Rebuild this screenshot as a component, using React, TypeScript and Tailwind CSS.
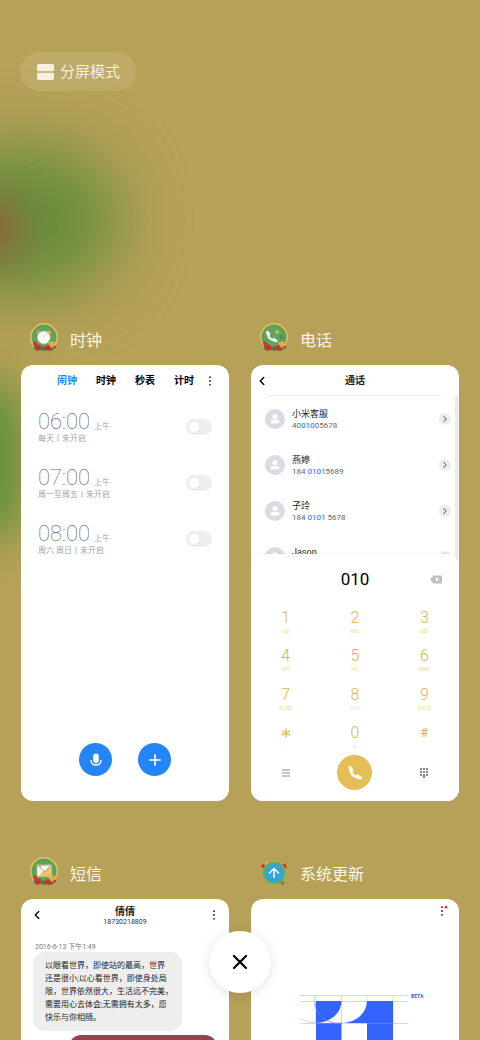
import type { ReactNode } from "react";
import { ChevronLeft, ChevronRight, Plus, X } from "lucide-react";

const alarms = [
  { time: "06:00", period: "上午", repeat: "每天丨未开启" },
  { time: "07:00", period: "上午", repeat: "周一至周五丨未开启" },
  { time: "08:00", period: "上午", repeat: "周六 周日丨未开启" },
];

const contacts = [
  { name: "小米客服", before: "40", match: "010", after: "05678" },
  { name: "燕婷", before: "184 ", match: "010", after: "15689" },
  { name: "子玲", before: "184 ", match: "010", after: "1 5678" },
  { name: "Jason", before: "184 ", match: "010", after: "2 5678" },
];

const keys = [
  { digit: "1", sub: "QO" },
  { digit: "2", sub: "ABC" },
  { digit: "3", sub: "DEF" },
  { digit: "4", sub: "GHI" },
  { digit: "5", sub: "JKL" },
  { digit: "6", sub: "MNO" },
  { digit: "7", sub: "PQRS" },
  { digit: "8", sub: "TUV" },
  { digit: "9", sub: "WXYZ" },
  { digit: "*", sub: "," },
  { digit: "0", sub: "+" },
  { digit: "#", sub: "" },
];

function Handset() {
  return (
    <g fill="none" stroke="#fff" strokeLinecap="round">
      <path d="M5.500 6.500C6.500 13 11 17.500 17.500 18.500" strokeWidth="3.4" />
      <path d="M5.500 5l2.200 3.600" strokeWidth="4.4" />
      <path d="M15.400 16.300l3.600 2.200" strokeWidth="4.4" />
    </g>
  );
}

// Round holiday badge shared by the clock, phone and message icons
function WreathIcon({ children }: { children: ReactNode }) {
  return (
    <svg viewBox="0 0 28 30" className="h-[30px] w-7">
      <circle cx="14" cy="14" r="13.2" fill="#5fa55c" stroke="#edbd55" strokeWidth="1.5" />
      <circle cx="14" cy="14" r="11" fill="none" stroke="#3f8450" strokeWidth="0.8" strokeDasharray="1 2" />
      {children}
      <path d="M4 22l3-1 3 4 5-2 5 2 3-2 1 3-3 2-3-1-4 1-4-1-3 1-3-2z" fill="#4f7a3d" />
      <circle cx="5" cy="20.5" r="2" fill="#d8322f" />
      <circle cx="8.5" cy="24.5" r="3" fill="#d8322f" />
      <circle cx="18" cy="25" r="2.8" fill="#d8322f" />
      <circle cx="24.5" cy="24" r="1.5" fill="#c23a2d" />
      <path d="M18 20l5-2 3 3-4 4z" fill="#eeb650" />
      <path d="M20 20l3 3m-1-4l3 2" stroke="#c08034" strokeWidth="0.7" />
      <circle cx="8.5" cy="24.5" r="0.8" fill="#8e1f2a" />
      <circle cx="18" cy="25" r="0.8" fill="#8e1f2a" />
    </svg>
  );
}

function ClockIcon() {
  return (
    <WreathIcon>
      <circle cx="8.5" cy="9.5" r="2.2" fill="#b99a78" />
      <circle cx="19" cy="9.5" r="2.2" fill="#b99a78" />
      <circle cx="13.8" cy="14.5" r="6.5" fill="#fbfaf7" stroke="#b9ad9c" strokeWidth="0.7" />
      <path d="M13.500 12v2" stroke="#c9c0b4" strokeWidth="0.8" />
      <path d="M16 8.500l1.500 2.500 2.500-1-1-2.500z" fill="#edbd55" />
    </WreathIcon>
  );
}

function PhoneIcon() {
  return (
    <WreathIcon>
      <g transform="translate(4 6) scale(0.64)">
        <Handset />
      </g>
      <path d="M17 6l.8 2.200 2.200.8-2.200.8L17 12l-.8-2.200L14 9l2.200-.8z" fill="#edbd55" />
      <path d="M21.500 12l1.600 2-1.600 2-1.600-2z" fill="none" stroke="#2e6b45" strokeWidth="0.8" />
    </WreathIcon>
  );
}

function MessageIcon() {
  return (
    <WreathIcon>
      <rect x="7" y="7.5" width="14.5" height="12" rx="0.8" fill="#faf8f0" stroke="#a8a493" strokeWidth="0.5" />
      <path d="M21.500 8v11.500H8l6-6z" fill="#efc266" />
      <path d="M7.500 8l7 7 7-7z" fill="#faf8f0" stroke="#7f8b78" strokeWidth="0.8" />
      <circle cx="10" cy="9.5" r="1.2" fill="#edb13d" />
    </WreathIcon>
  );
}

function UpdateIcon() {
  return (
    <svg viewBox="0 0 28 30" className="h-[30px] w-7">
      <circle cx="14" cy="16" r="12" fill="#5cae62" stroke="#d9a94b" strokeWidth="0.8" />
      <circle cx="14" cy="16" r="9.2" fill="#31a4dc" />
      <path d="M14 21v-9.500m-5 5l5-5 5 5" fill="none" stroke="#fff" strokeWidth="1.5" />
      <circle cx="3" cy="9" r="1.8" fill="#d42f30" />
      <path d="M5 6l2-2 1.500 1.500-2 2z" fill="#e9b343" />
      <path d="M22.500 7l3-.5 1.500 4-2 .5z" fill="#d42f30" />
      <path d="M22.500 24l1.500 2-1.500 2-1.500-2z" fill="none" stroke="#3c6a3c" strokeWidth="0.9" />
    </svg>
  );
}

function MoreIcon({ hasUpdate = false }: { hasUpdate?: boolean }) {
  return (
    <svg viewBox="0 0 12 12" className="size-3" fill="#222">
      <circle cx="6" cy="2.2" r="0.9" />
      <circle cx="6" cy="6" r="0.9" />
      <circle cx="6" cy="9.8" r="0.9" />
      {hasUpdate && <circle cx="10" cy="2.2" r="1.4" fill="#f5362c" />}
    </svg>
  );
}

function TaskCard({ title, icon, children }: { title: string; icon: ReactNode; children: ReactNode }) {
  return (
    <section>
      <header className="flex h-[50px] items-center gap-3 pl-[9px]">
        <span className="pb-1">{icon}</span>
        <h2 className="pt-[2px] text-base leading-5 text-[#fbf6e6]">{title}</h2>
      </header>
      <div className="flex aspect-[208/436] flex-col overflow-hidden rounded-xl bg-white">
        {children}
      </div>
    </section>
  );
}

function ClockApp() {
  return (
    <>
      <nav className="flex h-8 items-center justify-end gap-[19px] pr-[13px] text-[10px] leading-4 font-bold text-black">
        <button className="text-[#2487f5]">闹钟</button>
        <button>时钟</button>
        <button>秒表</button>
        <button>计时</button>
        <button aria-label="更多" className="-ml-[9px]">
          <MoreIcon />
        </button>
      </nav>
      <ul className="flex-1 pt-[2px]">
        {alarms.map((alarm) => (
          <li key={alarm.time} className="flex h-14 items-center justify-between px-[17px]">
            <label htmlFor={alarm.time} className="text-[8px] leading-[10px] text-[#a3a3a3]">
              <span className="flex items-baseline gap-1">
                <span className="text-[22px] leading-6 font-thin text-[#5c5c5c]">{alarm.time}</span>
                {alarm.period}
              </span>
              {alarm.repeat}
            </label>
            <input
              id={alarm.time}
              type="checkbox"
              className="h-4 w-[26px] appearance-none rounded-full bg-[#ededed] p-[3px] before:block before:size-[10px] before:rounded-full before:bg-white checked:bg-[#2487f5] checked:before:ml-auto"
            />
          </li>
        ))}
      </ul>
      <div className="flex justify-center gap-[26px] pb-[25px]">
        <button aria-label="语音" className="flex size-[33px] items-center justify-center rounded-full bg-[#2385f7]">
          <svg viewBox="0 0 14 14" className="size-[14px]">
            <rect x="4.2" y="0.5" width="5.6" height="9.5" rx="2.8" fill="#fff" />
            <path d="M2 7c0 3 2 5 5 5s5-2 5-5" fill="none" stroke="#fff" strokeWidth="1.3" />
          </svg>
        </button>
        <button aria-label="添加闹钟" className="flex size-[33px] items-center justify-center rounded-full bg-[#2385f7] text-white">
          <Plus className="size-[18px]" strokeWidth={2.2} />
        </button>
      </div>
    </>
  );
}

function DialerApp() {
  return (
    <>
      <header className="grid h-[30px] grid-cols-[1fr_auto_1fr] items-center px-1 pt-[2px]">
        <button aria-label="返回">
          <ChevronLeft className="size-[14px] text-black" strokeWidth={2.5} />
        </button>
        <h3 className="text-[10px] leading-4 font-bold text-[#222]">通话</h3>
      </header>
      <div className="mx-4 h-px bg-[#f0f0f0]" />
      <div className="flex min-h-0 flex-1">
        <ul className="flex-1 overflow-hidden pl-[14px]">
          {contacts.map((contact) => (
            <li key={contact.name} className="flex h-[46px] items-center">
              <svg viewBox="0 0 20 20" className="size-5">
                <circle cx="10" cy="10" r="10" fill="#d9dce3" />
                <circle cx="10" cy="7.5" r="2.6" fill="#fff" />
                <rect x="5.5" y="11" width="9" height="3.5" rx="1.7" fill="#fff" />
              </svg>
              <div className="ml-[7px] flex-1 pt-px leading-[11px]">
                <p className="text-[9px] text-[#222]">{contact.name}</p>
                <p className="text-[8px] text-[#666]">
                  {contact.before}
                  <span className="font-medium text-[#19a0ea]">{contact.match}</span>
                  {contact.after}
                </p>
              </div>
              <button
                aria-label={`${contact.name} 详情`}
                className="mr-1 flex size-3 items-center justify-center rounded-full bg-[#ededed]"
              >
                <ChevronRight className="size-[10px] text-[#666]" strokeWidth={2.5} />
              </button>
            </li>
          ))}
        </ul>
        <div className="mr-px w-[3px] bg-[#ececec]" />
      </div>
      <div className="relative -mt-3 rounded-t-xl bg-white shadow-[0_-1px_3px_rgba(0,0,0,0.05)]">
        <div className="grid h-[47px] grid-cols-3 items-center pt-[3px]">
          <output className="col-start-2 text-center text-[17px] leading-5 text-black">010</output>
          <button aria-label="删除" className="mr-[17px] justify-self-end">
            <svg viewBox="0 0 12 9" className="h-[9px] w-3">
              <path d="M3.500.5H11a1 1 0 0 1 1 1v6a1 1 0 0 1-1 1H3.500L0 4.500z" fill="#bdbdbd" />
              <path d="M5.500 2.800l3.400 3.400m0-3.400L5.500 6.200" stroke="#fff" strokeWidth="1.1" />
            </svg>
          </button>
        </div>
        <div className="grid h-[154px] grid-cols-3 grid-rows-4 text-[#e2b544]">
          {keys.map((key) => (
            <button key={key.digit} className="flex flex-col items-center justify-center pt-px">
              {key.digit === "*" ? (
                <svg viewBox="0 0 20 20" className="size-5" role="img" aria-label="*">
                  <path d="M10 5.500v9M6 7.800l8 4.400M14 7.800l-8 4.400" stroke="#e6c05a" strokeWidth="1.4" />
                </svg>
              ) : key.digit === "#" ? (
                <span className="text-xs leading-5 font-medium">#</span>
              ) : (
                <span className="text-base leading-5 font-light">{key.digit}</span>
              )}
              <span className="h-[6px] text-[5px] leading-[6px] text-[#efd891]">{key.sub}</span>
            </button>
          ))}
        </div>
        <div className="grid grid-cols-3 items-center justify-items-center pb-[11px]">
          <button aria-label="菜单">
            <svg viewBox="0 0 8 8" className="size-2">
              <path d="M0 1h8M0 4h8M0 7h8" stroke="#8a8a8a" strokeWidth="1" />
            </svg>
          </button>
          <button aria-label="拨打" className="flex size-[35px] items-center justify-center rounded-full bg-[#e5be58]">
            <svg viewBox="0 0 24 24" className="size-[18px]">
              <Handset />
            </svg>
          </button>
          <button aria-label="拨号盘">
            <svg viewBox="0 0 8 10" className="h-[10px] w-2" fill="#808080">
              {[0, 3, 6].map((y) =>
                [0, 3, 6].map((x) => <rect key={`${x}-${y}`} x={x} y={y} width="2" height="2" rx="0.5" />)
              )}
              <rect x="3" y="8" width="2" height="2" rx="0.5" />
            </svg>
          </button>
        </div>
      </div>
    </>
  );
}

function MessagesApp() {
  return (
    <>
      <header className="grid h-9 grid-cols-[1fr_auto_1fr] items-center px-[9px]">
        <button aria-label="返回" className="pb-1">
          <ChevronLeft className="size-[14px] text-black" strokeWidth={2.5} />
        </button>
        <div className="pt-[2px] text-center">
          <h3 className="text-[10px] leading-[11px] font-bold text-[#222]">倩倩</h3>
          <p className="pb-1 text-[7px] leading-[10px] text-[#333]">18730218809</p>
        </div>
        <button aria-label="更多" className="justify-self-end pb-1">
          <MoreIcon />
        </button>
      </header>
      <div className="px-3 pt-[7px]">
        <time className="block pl-[2px] text-[7px] leading-[10px] text-[#777]">2016-6-13 下午1:49</time>
        <p className="w-[149px] rounded-xl bg-[#eee] px-3 py-[7px] text-[8px] leading-[13px] whitespace-nowrap text-[#222]">
          以眼看世界，即使站的最高，世界
          <br />
          还是很小;以心看世界，即使身处局
          <br />
          限，世界依然很大，生活远不完美，
          <br />
          需要用心去体会;无需拥有太多，愿
          <br />
          快乐与你相随。
        </p>
        <p className="mt-1 ml-auto h-16 w-[148px] rounded-xl bg-[#964350]" />
      </div>
    </>
  );
}

function UpdateApp() {
  return (
    <>
      <header className="flex justify-end pt-[6px] pr-[11px]">
        <button aria-label="更多">
          <MoreIcon hasUpdate />
        </button>
      </header>
      <div className="mt-[76px] flex gap-[3px] pl-[49px]">
        <svg viewBox="0 0 108 140" className="h-[140px] w-[108px]">
          <g fill="none" stroke="#b5cdf5" strokeWidth="0.7">
            <path d="M0 2.500h108M0 8.500h108M0 30.500h108M16 2v28M41.500 2v28M67 2v28M93 2v28" />
            <path d="M0 25.500Q7 30 16 30M14 3q0 15 9 22t19 5" />
          </g>
          <g fill="#3463fd">
            <path d="M16 8h25.500A25.500 22 0 0 1 16 30z" />
            <path d="M67 8v22H42A25.500 22 0 0 0 67 8z" />
            <path d="M16 30h25.500v110H16zM67 8h26v132H67z" />
          </g>
          <path d="M16 30.500h25.500M67 30.500h26M14.500 10q1 9 8.500 15t19 5" fill="none" stroke="#6a90fb" strokeWidth="0.6" />
        </svg>
        <span className="text-[5px] leading-[7px] font-bold text-[#3463fd]">BETA</span>
      </div>
    </>
  );
}

export default function App() {
  return (
    <main
      lang="zh-CN"
      className="relative isolate h-screen overflow-hidden bg-[#b7a158] px-[21px] pt-[52px] font-['Roboto','Noto_Sans_CJK_SC',sans-serif]"
    >
      {/* Blurred wallpaper */}
      <div className="absolute top-[145px] -left-20 -z-10 h-[150px] w-[200px] rounded-full bg-[#6a8e3d] blur-[32px]" />
      <div className="absolute top-[195px] -left-10 -z-10 h-[70px] w-[62px] rounded-full bg-[#8b683c] blur-[18px]" />
      <div className="absolute top-[375px] -left-20 -z-10 h-[170px] w-[105px] rounded-full bg-[#5f903b] blur-[22px]" />

      <button className="-ml-px flex h-[39px] items-center gap-[6px] rounded-full bg-white/10 pr-4 pl-[17px] text-[15px] leading-5 text-[#f6efdc]">
        <svg viewBox="0 0 17 16" className="h-4 w-[17px]" fill="#f6efe0">
          <rect width="17" height="7.3" rx="1.5" />
          <rect y="8.7" width="17" height="7.3" rx="1.5" />
        </svg>
        分屏模式
      </button>

      <div className="mt-56 grid grid-cols-2 gap-x-[22px] gap-y-12">
        <TaskCard title="时钟" icon={<ClockIcon />}>
          <ClockApp />
        </TaskCard>
        <TaskCard title="电话" icon={<PhoneIcon />}>
          <DialerApp />
        </TaskCard>
        <TaskCard title="短信" icon={<MessageIcon />}>
          <MessagesApp />
        </TaskCard>
        <TaskCard title="系统更新" icon={<UpdateIcon />}>
          <UpdateApp />
        </TaskCard>
      </div>

      {/* Clear all, floats above the task cards */}
      <button
        aria-label="清除全部"
        className="absolute bottom-[47px] left-1/2 flex size-[62px] -translate-x-1/2 items-center justify-center rounded-full bg-white text-black shadow-[0_2px_12px_rgba(0,0,0,0.12)]"
      >
        <X className="size-6" strokeWidth={2.2} />
      </button>
    </main>
  );
}
